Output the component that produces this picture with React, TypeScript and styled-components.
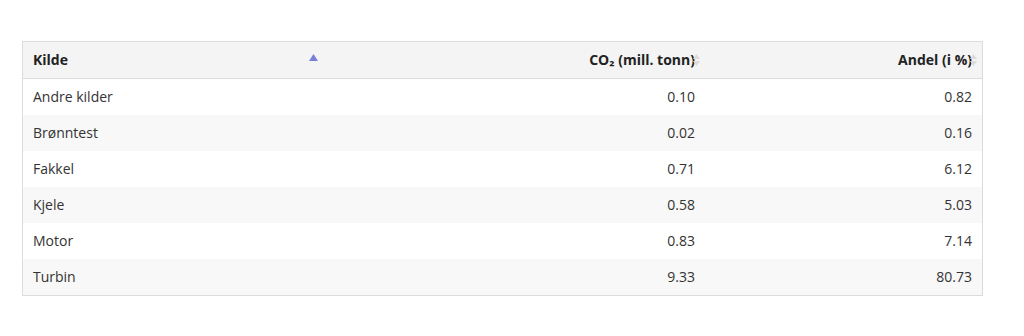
import React from "react";
import styled, { createGlobalStyle } from "styled-components";

const GlobalStyle = createGlobalStyle`
  body {
    margin: 0;
    background: #ffffff;
    font-family: "Open Sans", "Noto Sans", sans-serif;
  }
`;

const Page = styled.div`
  padding: 41px 41px 0 22px;
`;

const Table = styled.table`
  width: 961px;
  border-collapse: separate;
  border-spacing: 0;
  border: 1px solid #dcdcdc;
  font-size: 14px;
  line-height: 20px;
  color: #333333;
  table-layout: fixed;
`;

const HeaderRow = styled.tr`
  background: #f4f4f4;
`;

const HeaderCell = styled.th<{ $align: "left" | "right"; $width: number }>`
  position: relative;
  width: ${({ $width }) => $width}px;
  height: 37px;
  padding: 0 10px;
  box-sizing: border-box;
  border-bottom: 1px solid #dcdcdc;
  text-align: ${({ $align }) => $align};
  font-weight: 700;
  color: #222222;
`;

const SortIcon = styled.svg<{ $right: number; $shift: number }>`
  position: absolute;
  right: ${({ $right }) => $right}px;
  top: 50%;
  transform: translateY(${({ $shift }) => $shift}px);
`;

const BodyRow = styled.tr`
  background: #ffffff;
  &:nth-child(even) {
    background: #f8f8f8;
  }
`;

const Cell = styled.td<{ $align: "left" | "right" }>`
  height: 36px;
  padding: 0 10px;
  box-sizing: border-box;
  text-align: ${({ $align }) => $align};
`;

const rows = [
  { kilde: "Andre kilder", co2: "0.10", andel: "0.82" },
  { kilde: "Brønntest", co2: "0.02", andel: "0.16" },
  { kilde: "Fakkel", co2: "0.71", andel: "6.12" },
  { kilde: "Kjele", co2: "0.58", andel: "5.03" },
  { kilde: "Motor", co2: "0.83", andel: "7.14" },
  { kilde: "Turbin", co2: "9.33", andel: "80.73" },
];

const SortedUp = () => (
  <SortIcon $right={5} $shift={-6} width="9" height="7" viewBox="0 0 9 7">
    <path d="M4.5 0 L9 7 L0 7 Z" fill="#7b7fdc" />
  </SortIcon>
);

const Unsorted = () => (
  <SortIcon $right={5} $shift={-6} width="7" height="12" viewBox="0 0 7 12">
    <path d="M3.5 0 L7 5 L0 5 Z" fill="#dcdcdc" />
    <path d="M3.5 12 L7 7 L0 7 Z" fill="#dcdcdc" />
  </SortIcon>
);

export default function App() {
  return (
    <Page>
      <GlobalStyle />
      <Table>
        <thead>
          <HeaderRow>
            <HeaderCell $align="left" $width={300}>
              Kilde
              <SortedUp />
            </HeaderCell>
            <HeaderCell $align="right" $width={382}>
              CO₂ (mill. tonn)
              <Unsorted />
            </HeaderCell>
            <HeaderCell $align="right" $width={277}>
              Andel (i %)
              <Unsorted />
            </HeaderCell>
          </HeaderRow>
        </thead>
        <tbody>
          {rows.map((row) => (
            <BodyRow key={row.kilde}>
              <Cell $align="left">{row.kilde}</Cell>
              <Cell $align="right">{row.co2}</Cell>
              <Cell $align="right">{row.andel}</Cell>
            </BodyRow>
          ))}
        </tbody>
      </Table>
    </Page>
  );
}
